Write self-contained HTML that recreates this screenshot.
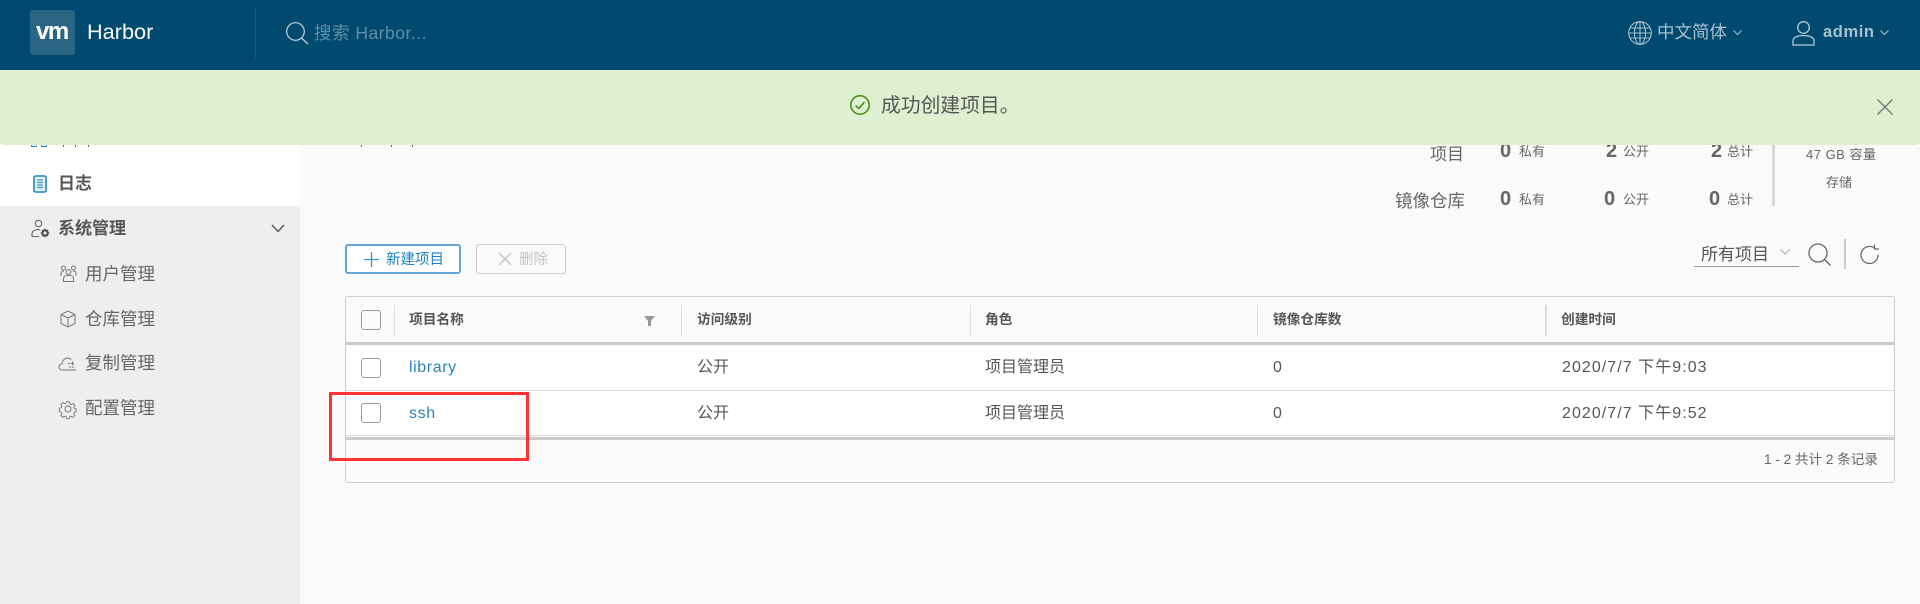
<!DOCTYPE html>
<html lang="zh"><head><meta charset="utf-8"><title>Harbor</title>
<style>
html,body{margin:0;padding:0;width:1920px;height:604px;overflow:hidden;background:#fafafa}
body{position:relative;font-family:"Liberation Sans","Noto Sans CJK SC",sans-serif;color:#565656}
.a,.t,svg{position:absolute}
.t{white-space:nowrap;line-height:24px;height:24px}
svg{fill:none;overflow:visible}
.m{font-size:17.5px;color:#666}
.b{font-weight:700}
.th{font-size:13.7px;font-weight:700;color:#565656}
.td{font-size:16px;color:#565656}
.lk{color:#2a82bd;font-size:16px;letter-spacing:.6px}
.dt{letter-spacing:1.05px}
.cb{position:absolute;width:18px;height:18px;border:1px solid #9a9a9a;border-radius:3px;background:#fff;left:361px}
.sep{position:absolute;width:1px;top:305px;height:31px;background:#ddd}
.n{font-size:20px;font-weight:700;color:#666;letter-spacing:.5px}
.s{font-size:13px;color:#666}
</style></head><body>

<!-- sidebar -->
<div class="a" style="left:0;top:70px;width:300px;height:136px;background:#fff"></div>
<div class="a" style="left:0;top:206px;width:300px;height:398px;background:#eee"></div>

<!-- clipped remnants under the alert -->
<div class="a" style="left:31px;top:145px;width:6px;height:2px;border:1px solid #2a8fc8;border-top:0;box-sizing:border-box"></div>
<div class="a" style="left:41px;top:145px;width:6px;height:2px;border:1px solid #2a8fc8;border-top:0;box-sizing:border-box"></div>
<div class="a" style="left:63px;top:145px;width:1px;height:2px;background:#666"></div>
<div class="a" style="left:75px;top:145px;width:1px;height:2px;background:#666"></div>
<div class="a" style="left:88px;top:145px;width:1px;height:2px;background:#666"></div>
<div class="a" style="left:361px;top:145px;width:1px;height:2px;background:#666"></div>
<div class="a" style="left:391px;top:145px;width:1px;height:2px;background:#666"></div>
<div class="a" style="left:412px;top:145px;width:1px;height:2px;background:#666"></div>

<!-- sidebar items -->
<svg style="left:33px;top:175px" width="14" height="18" viewBox="0 0 14 18"><rect x="1" y="1" width="12" height="16" rx="1.5" stroke="#1d87c4" stroke-width="1.6" fill="#e8f3f9"/><path d="M4 5h6M4 7.5h6M4 10h6M4 12.5h6" stroke="#3f94c6" stroke-width="1.2"/></svg>
<div class="t b" style="left:58px;top:172px;font-size:17px;color:#565656">日志</div>

<svg style="left:31px;top:219px" width="19" height="19" viewBox="0 0 19 19" stroke="#666" stroke-width="1.1"><circle cx="7.5" cy="4.5" r="3.2"/><path d="M1 17.5v-2.5c0-2.6 2.500-4.400 6-4.400 .8 0 1.400.1 2 .2M1 17.500h7"/><circle cx="14" cy="14" r="2.600" stroke-width="2.200" stroke="#555"/><path d="M14 9.800v1.400M14 16.800v1.400M9.800 14h1.400M16.800 14h1.400M11 11l1 1M16 16l1 1M17 11l-1 1M12 16l-1 1" stroke="#555" stroke-width="1.400"/></svg>
<div class="t b" style="left:58px;top:217px;font-size:17px;color:#565656">系统管理</div>
<svg style="left:271px;top:224px" width="14" height="9" viewBox="0 0 14 9" stroke="#555" stroke-width="1.4"><path d="M1 1l6 6.500L13 1"/></svg>

<svg style="left:60px;top:265px" width="17" height="17" viewBox="0 0 17 17" stroke="#777" stroke-width="1"><circle cx="8.500" cy="7" r="2.400"/><path d="M3.500 16.500v-3c0-2 2-3.200 5-3.200s5 1.200 5 3.200v3z"/><circle cx="3.500" cy="3" r="2"/><circle cx="13.500" cy="3" r="2"/><path d="M1 11V8.500C1 7 2 6 4 6M16 11V8.500C16 7 15 6 13 6"/></svg>
<div class="t m" style="left:85px;top:262px">用户管理</div>

<svg style="left:60px;top:310px" width="16" height="18" viewBox="0 0 16 18" stroke="#777" stroke-width="1"><path d="M8 1l7 3.500v9L8 17l-7-3.500v-9zM1 4.500L8 8l7-3.500M8 8v9"/></svg>
<div class="t m" style="left:85px;top:307px">仓库管理</div>

<svg style="left:58px;top:356px" width="19" height="15" viewBox="0 0 19 15" stroke="#777" stroke-width="1"><path d="M5 14H4C2 14 1 12.800 1 11c0-1.700 1.200-3 2.800-3C4.500 4.500 6.800 2 9.500 2c1.500 0 2.800.6 3.700 1.700M5 14h13"/><path d="M10 7.500h6M14 5.500l2 2-2 2M16 11h-5" stroke-dasharray="2 1"/></svg>
<div class="t m" style="left:85px;top:351px">复制管理</div>

<svg style="left:59px;top:400px" width="18" height="18" viewBox="0 0 18 18" stroke="#777" stroke-width="1"><circle cx="9" cy="9" r="3"/><path d="M7.500 1h3l.5 2.300 1.700.8 2-1.200 2 2.200-1.200 2 .6 1.400 2 .5v3l-2 .5-.8 1.700 1.200 2-2.200 2-2-1.200-1.500.7-.5 2.100h-3l-.5-2.100-1.600-.7-2 1.200-2.200-2 1.200-2-.7-1.700-2.100-.5V8l2.100-.5.7-1.500-1.200-2 2.100-2.100 2 1.200 1.600-.8z" transform="translate(.9 .9) scale(.9)"/></svg>
<div class="t m" style="left:85px;top:396px">配置管理</div>

<!-- stats -->
<div class="t" style="left:1430px;top:143px;font-size:17px;color:#666">项目</div>
<div class="t" style="left:1395px;top:189px;font-size:17.500px;color:#666">镜像仓库</div>
<div class="t n" style="left:1500px;top:139px">0</div><div class="t s" style="left:1519px;top:140px">私有</div>
<div class="t n" style="left:1606px;top:139px">2</div><div class="t s" style="left:1623px;top:140px">公开</div>
<div class="t n" style="left:1711px;top:139px">2</div><div class="t s" style="left:1727px;top:140px">总计</div>
<div class="t n" style="left:1500px;top:187px">0</div><div class="t s" style="left:1519px;top:188px">私有</div>
<div class="t n" style="left:1604px;top:187px">0</div><div class="t s" style="left:1623px;top:188px">公开</div>
<div class="t n" style="left:1709px;top:187px">0</div><div class="t s" style="left:1727px;top:188px">总计</div>
<div class="a" style="left:1772px;top:145px;width:3px;height:61px;background:#d8d8d8"></div>
<div class="t s" style="left:1806px;top:143px;letter-spacing:.5px">47 GB 容量</div>
<div class="t s" style="left:1826px;top:171px">存储</div>

<!-- toolbar -->
<div class="a" style="left:345px;top:244px;width:112px;height:26px;border:2px solid #62a6dc;border-radius:3px;background:#fff"></div>
<svg style="left:364px;top:251px" width="15" height="17" viewBox="0 0 15 17" stroke="#3a93c8" stroke-width="1.300"><path d="M7.500 1v15M0 8.500h15"/></svg>
<div class="t" style="left:386px;top:248px;font-size:14.500px;color:#1a82bd">新建项目</div>
<div class="a" style="left:476px;top:244px;width:88px;height:28px;border:1px solid #ccc;border-radius:3px"></div>
<svg style="left:498px;top:252px" width="14" height="14" viewBox="0 0 14 14" stroke="#bdbdbd" stroke-width="1.200"><path d="M1 1l12 12M13 1L1 13"/></svg>
<div class="t" style="left:519px;top:248px;font-size:14.500px;color:#c4c4c4">删除</div>

<div class="t" style="left:1701px;top:243px;font-size:17px;color:#565656">所有项目</div>
<svg style="left:1780px;top:249px" width="10" height="6" viewBox="0 0 10 6" stroke="#aaa" stroke-width="1.100"><path d="M.5.500L5 5 9.500.5"/></svg>
<div class="a" style="left:1694px;top:266px;width:105px;height:1px;background:#999"></div>
<svg style="left:1808px;top:243px" width="23" height="23" viewBox="0 0 23 23" stroke="#666" stroke-width="1.300"><circle cx="10" cy="10" r="9"/><path d="M16.500 16.500L22.500 22.500"/></svg>
<div class="a" style="left:1844px;top:239px;width:2px;height:30px;background:#ccc"></div>
<svg style="left:1860px;top:244px" width="19" height="20" viewBox="0 0 19 20" stroke="#666" stroke-width="1.200"><path d="M15 4.500A8.500 8.500 0 1 0 18 11M14.500 0.500v4.500H19"/></svg>

<!-- table -->
<div class="a" style="left:345px;top:296px;width:1548px;height:185px;border:1px solid #ccc;border-radius:3px;background:#fafafa"></div>
<div class="a" style="left:346px;top:345px;width:1548px;height:90px;background:#fff"></div>
<div class="a" style="left:346px;top:342px;width:1548px;height:3px;background:#ccc"></div>
<div class="a" style="left:346px;top:390px;width:1548px;height:1px;background:#ddd"></div>
<div class="a" style="left:346px;top:435px;width:1548px;height:1px;background:#ddd"></div>
<div class="a" style="left:346px;top:437px;width:1548px;height:3px;background:#ccc"></div>

<div class="cb" style="top:310px;background:#fafafa"></div>
<div class="cb" style="top:358px"></div>
<div class="cb" style="top:403px"></div>
<div class="sep" style="left:394px"></div>
<div class="sep" style="left:681px"></div>
<div class="sep" style="left:970px"></div>
<div class="sep" style="left:1257px"></div>
<div class="sep" style="left:1545px;width:2px"></div>

<div class="t th" style="left:409px;top:308px">项目名称</div>
<svg style="left:644px;top:316px" width="11" height="10" viewBox="0 0 11 10"><path d="M0 0h11L7 5v5H4V5z" fill="#999"/></svg>
<div class="t th" style="left:697px;top:308px">访问级别</div>
<div class="t th" style="left:985px;top:308px">角色</div>
<div class="t th" style="left:1273px;top:308px">镜像仓库数</div>
<div class="t th" style="left:1561px;top:308px">创建时间</div>

<div class="t lk" style="left:409px;top:356px">library</div>
<div class="t td" style="left:697px;top:356px">公开</div>
<div class="t td" style="left:985px;top:356px">项目管理员</div>
<div class="t td" style="left:1273px;top:356px">0</div>
<div class="t td dt" style="left:1562px;top:356px">2020/7/7 下午9:03</div>

<div class="t lk" style="left:409px;top:402px">ssh</div>
<div class="t td" style="left:697px;top:402px">公开</div>
<div class="t td" style="left:985px;top:402px">项目管理员</div>
<div class="t td" style="left:1273px;top:402px">0</div>
<div class="t td dt" style="left:1562px;top:402px">2020/7/7 下午9:52</div>

<div class="t" style="right:42px;top:448px;font-size:13.600px;color:#666">1 - 2 共计 2 条记录</div>

<!-- red annotation -->
<div class="a" style="left:329px;top:392px;width:194px;height:63px;border:3px solid #f33"></div>

<!-- header -->
<div class="a" style="left:0;top:0;width:1920px;height:70px;background:#004a70"></div>
<div class="a" style="left:30px;top:10px;width:45px;height:45px;border-radius:3px;background:#2a6583"></div>
<div class="t" style="left:36px;top:17px;font-size:24px;font-weight:700;color:#fff;letter-spacing:-1.500px;line-height:30px;height:30px">vm</div>
<div class="t" style="left:87px;top:19px;font-size:21.700px;color:#fafafa;line-height:26px;height:26px">Harbor</div>
<div class="a" style="left:255px;top:8px;width:1px;height:50px;background:#1d5e80"></div>
<svg style="left:286px;top:22px" width="23" height="22" viewBox="0 0 23 22" stroke="#c3d3dc" stroke-width="1.200"><circle cx="9.500" cy="9.500" r="8.800"/><path d="M15.500 16l6.500 6"/></svg>
<div class="t" style="left:314px;top:21px;font-size:17.500px;color:#5f8ea6;letter-spacing:.5px">搜索 Harbor...</div>

<svg style="left:1628px;top:21px" width="24" height="24" viewBox="0 0 24 24" stroke="#a9c0cd" stroke-width="1.100"><circle cx="12" cy="12" r="11.300"/><ellipse cx="12" cy="12" rx="5.500" ry="11.300"/><path d="M12 .7v22.600M2 7h20M2 17h20M.7 12h22.600"/></svg>
<div class="t" style="left:1657px;top:20px;font-size:17.500px;color:#a9c0cd">中文简体</div>
<svg style="left:1733px;top:30px" width="9" height="6" viewBox="0 0 9 6" stroke="#a9c0cd" stroke-width="1.100"><path d="M.5.500L4.500 4.500 8.500.5"/></svg>
<svg style="left:1792px;top:21px" width="23" height="25" viewBox="0 0 23 25" stroke="#b5c9d4" stroke-width="1.300"><circle cx="11.500" cy="6.500" r="5.800"/><path d="M1 24v-4.500c0-3 4.500-5 10.500-5s10.500 2 10.500 5V24z"/></svg>
<div class="t b" style="left:1823px;top:20px;font-size:16.500px;color:#a9c0cd;letter-spacing:.6px">admin</div>
<svg style="left:1880px;top:30px" width="9" height="6" viewBox="0 0 9 6" stroke="#a9c0cd" stroke-width="1.100"><path d="M.5.500L4.500 4.500 8.500.5"/></svg>

<!-- alert -->
<div class="a" style="left:0;top:70px;width:1920px;height:75px;background:#dff0d0;border-radius:0 0 4px 4px"></div>
<svg style="left:850px;top:95px" width="20" height="20" viewBox="0 0 20 20" stroke="#3e8c0f" stroke-width="1.500"><circle cx="10" cy="10" r="9.200"/><path d="M5.500 10.500l3.300 3L14.500 7"/></svg>
<div class="t" style="left:881px;top:94px;font-size:19.800px;color:#565656">成功创建项目。</div>
<svg style="left:1877px;top:99px" width="16" height="16" viewBox="0 0 16 16" stroke="#6b7a70" stroke-width="1.300"><path d="M.5.500l15 15M15.500.5l-15 15"/></svg>

</body></html>
